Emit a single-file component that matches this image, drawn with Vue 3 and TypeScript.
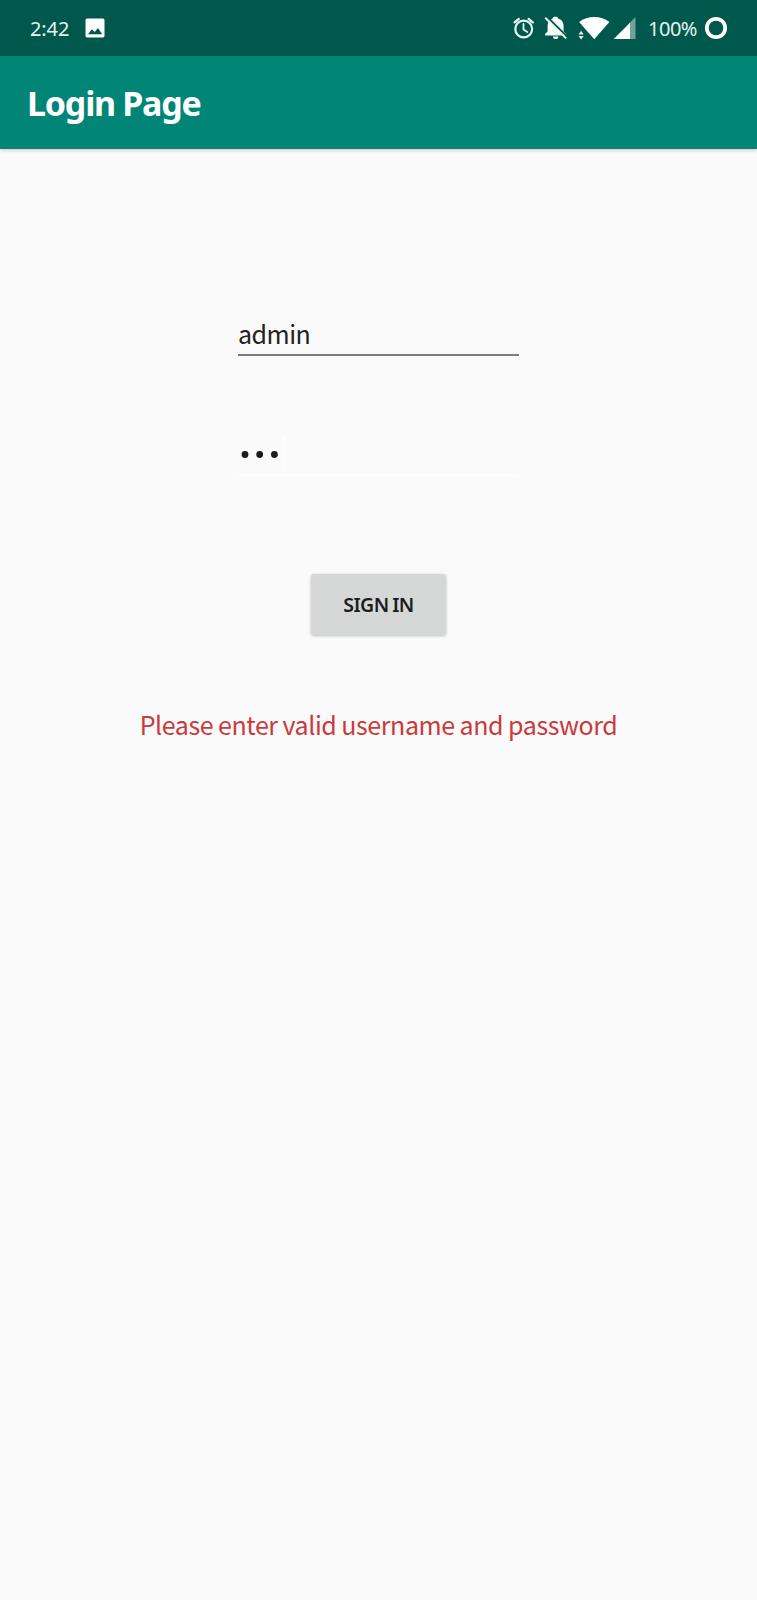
<script setup lang="ts">
import { ref } from 'vue'

const username = ref<string>('admin')
const passwordLength = ref<number>(3)
const message = ref<string>('Please enter valid username and password')
</script>

<template>
  <div class="screen">
    <header class="status">
      <span class="time">2:42</span>
      <svg class="photo" viewBox="0 0 20 20" width="20" height="20">
        <path fill="#fff" fill-rule="evenodd" d="M2 .5h16A1.7 1.7 0 0 1 19.5 2v16a1.7 1.7 0 0 1-1.5 1.5H2A1.7 1.7 0 0 1 .5 18V2A1.7 1.7 0 0 1 2 .5zM3 16.3h14.2l-4.2-6.2-3.3 4-2.8-2.8z" />
      </svg>
      <svg class="icons" viewBox="500 0 140 56" width="140" height="56">
        <g fill="none" stroke="#e9f5f2" stroke-linecap="round">
          <circle cx="523.7" cy="29" r="8.4" stroke-width="2.2" />
          <path stroke-width="1.8" d="M523.5 24v5.6l3.8 2.4" />
          <path stroke-width="2.3" d="M514.6 22.4l4.2-3.5M532.8 22.4l-4.2-3.5" />
        </g>
        <path fill="#f4fbf9" d="M545 35.4V34l2.6-2.6v-5.7c0-3.9 2-6.3 5.2-7.3v-.3c0-.8.9-1.3 2.6-1.3s2.6.5 2.6 1.3v.3c3.5 1 5.6 3.4 5.6 7.3v5.7l2.6 2.6v1.4zM553 36.4h5.4a2.7 2.7 0 0 1-5.4 0z" />
        <path fill="none" stroke="#00574b" stroke-width="2" d="M546.4 16.2l21.5 21.2" />
        <path fill="none" stroke="#f4fbf9" stroke-width="1.9" d="M545.2 17.8l21 20.6" />
        <path fill="#fff" d="M594.3 39.2L579.1 22.1c8.5-6.7 21.7-6.7 30.3 0z" />
        <path fill="#e5f3f0" d="M578.5 34.4h5.2l-2.6-3.6zM578.5 36h5.2l-2.6 3.6z" />
        <path fill="#6fa39a" d="M635.5 17v22h-7V24z" />
        <path fill="#fff" d="M630 22.7V39h-16.3z" />
      </svg>
      <span class="battery">100%</span>
      <svg class="ring" viewBox="0 0 24 24" width="24" height="24">
        <circle cx="12" cy="12" r="9.2" fill="none" stroke="#fff" stroke-width="3.8" />
      </svg>
    </header>

    <div class="toolbar"><h1><span>Login Page</span></h1></div>

    <main class="form">
      <div class="field user"><span>{{ username }}</span></div>
      <div class="field pass">
        <svg class="dots" viewBox="0 0 44 10" width="44" height="10">
          <circle v-for="n in passwordLength" :key="n" :cx="7 + (n - 1) * 14.7" cy="5.5" r="3.4" fill="#1b1b1b" />
        </svg>
        <i class="caret"></i>
      </div>
      <button class="signin" type="button"><span>SIGN IN</span></button>
      <p class="error"><span>{{ message }}</span></p>
    </main>
  </div>
</template>

<style>
body {
  background: #fafafa;
}
</style>

<style scoped>
.screen {
  width: 757px;
  height: 1600px;
  background: #fafafa;
  font-family: "Noto Sans", sans-serif;
  overflow: hidden;
}
.screen span {
  white-space: nowrap;
}
.status {
  display: flex;
  align-items: center;
  box-sizing: border-box;
  height: 56px;
  padding: 0 29px 0 30px;
  background: #00574b;
  color: #e4f3f0;
  font-size: 20px;
}
.time,
.battery {
  line-height: 28px;
  padding-top: 2px;
}
.time {
  width: 55px;
  letter-spacing: -0.1px;
}
.icons {
  flex: none;
  margin-left: auto;
}
.battery {
  width: 56px;
  margin-left: 8px;
  letter-spacing: -0.5px;
}
.ring {
  flex: none;
}
.photo {
  flex: none;
}
.toolbar {
  height: 93px;
  padding-left: 27px;
  background: #008577;
  box-shadow: 0 1px 4px rgba(0, 0, 0, 0.22);
}
h1 {
  margin: 0;
  color: #fff;
  font-size: 34px;
  font-weight: 700;
  line-height: 94px;
  letter-spacing: -1.2px;
  word-spacing: -0.5px;
}
.form {
  display: flex;
  flex-direction: column;
  align-items: center;
  padding-top: 161px;
}
.field {
  box-sizing: border-box;
  width: 281px;
  height: 46px;
}
.user {
  border-bottom: 2px solid #7b7b7b;
  color: #222;
  font-family: "Noto Sans CJK SC", sans-serif;
  font-size: 25px;
  line-height: 46px;
  letter-spacing: -0.5px;
}
.pass {
  display: flex;
  align-items: center;
  height: 47px;
  margin-top: 74px;
  padding-top: 4px;
  border-bottom: 3px solid #fdfdfd;
}
.caret {
  width: 3px;
  height: 35px;
  background: #fdfdfd;
}
.signin {
  width: 135px;
  height: 61px;
  margin-top: 97px;
  padding: 0;
  border: 0;
  border-radius: 3px;
  background: #d6d8d7;
  box-shadow: 0 1px 3px rgba(0, 0, 0, 0.25);
  color: #1c1e1d;
  font-family: "Noto Sans", sans-serif;
  font-size: 19.5px;
  font-weight: 600;
  line-height: 61px;
  letter-spacing: -0.6px;
  word-spacing: -0.8px;
}
.error {
  margin: 66px 0 0;
  color: #ca3a3c;
  font-family: "Noto Sans CJK SC", sans-serif;
  font-size: 25px;
  line-height: 47px;
  letter-spacing: -0.42px;
  word-spacing: -0.3px;
}
</style>
